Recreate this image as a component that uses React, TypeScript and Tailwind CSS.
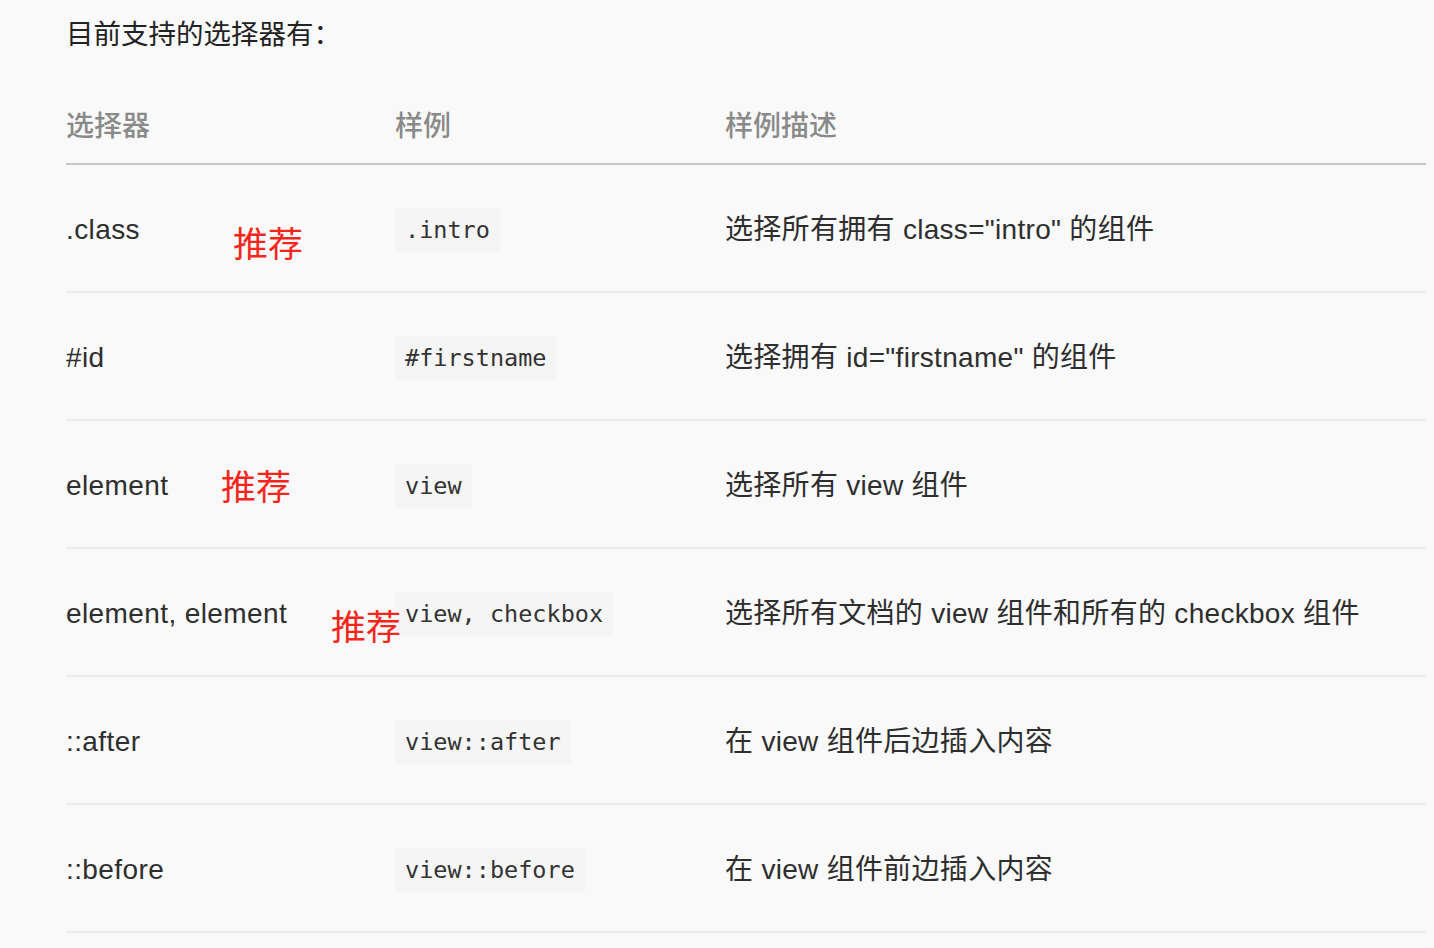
const rows = [
  { sel: ".class", code: ".intro", desc: "选择所有拥有 class=\"intro\" 的组件", tag: "left-[167px] top-[59px]" },
  { sel: "#id", code: "#firstname", desc: "选择拥有 id=\"firstname\" 的组件" },
  { sel: "element", code: "view", desc: "选择所有 view 组件", tag: "left-[155px] top-[46px]" },
  { sel: "element, element", code: "view, checkbox", desc: "选择所有文档的 view 组件和所有的 checkbox 组件", tag: "left-[265px] top-[58px]" },
  { sel: "::after", code: "view::after", desc: "在 view 组件后边插入内容" },
  { sel: "::before", code: "view::before", desc: "在 view 组件前边插入内容" },
];

const sans = "font-['Liberation_Sans','Noto_Sans_CJK_SC',sans-serif]";
const mono = "font-['DejaVu_Sans_Mono','Liberation_Mono',monospace]";

export default function App() {
  return (
    <div className={`min-h-[948px] w-[1434px] bg-[#f9f9f9] pl-[66px] pr-[8px] text-[#2e2e2e] ${sans}`}>
      <p className="pt-[12px] text-[27.5px] leading-[40px] text-[#222] font-['Noto_Sans_CJK_SC',sans-serif]">目前支持的选择器有：</p>

      <div className="mt-[33px]">
        {/* header */}
        <div className="grid h-[80px] grid-cols-[329px_330px_1fr] items-center border-b-2 border-[#c6c6c6] text-[28px] font-medium text-[#8a8a8a] font-['Noto_Sans_CJK_SC',sans-serif]">
          <div>选择器</div>
          <div>样例</div>
          <div>样例描述</div>
        </div>

        {rows.map((r) => (
          <div key={r.sel} className="relative grid h-[128px] grid-cols-[329px_330px_1fr] items-center border-b-2 border-[#ececec] pt-[4px] text-[28px]">
            <div className="tracking-[0.4px]">{r.sel}</div>
            <div>
              <span className={`inline-block rounded-[2px] bg-[#f5f5f5] px-[10px] py-[7px] text-[23.5px] leading-[30px] text-[#333] ${mono}`}>{r.code}</span>
            </div>
            <div className="tracking-[0.3px]">{r.desc}</div>
            {r.tag && (
              <span className={`absolute ${r.tag} text-[35px] leading-[36px] text-[#f4261c] font-['Noto_Sans_CJK_SC',sans-serif]`}>推荐</span>
            )}
          </div>
        ))}
      </div>
    </div>
  );
}
